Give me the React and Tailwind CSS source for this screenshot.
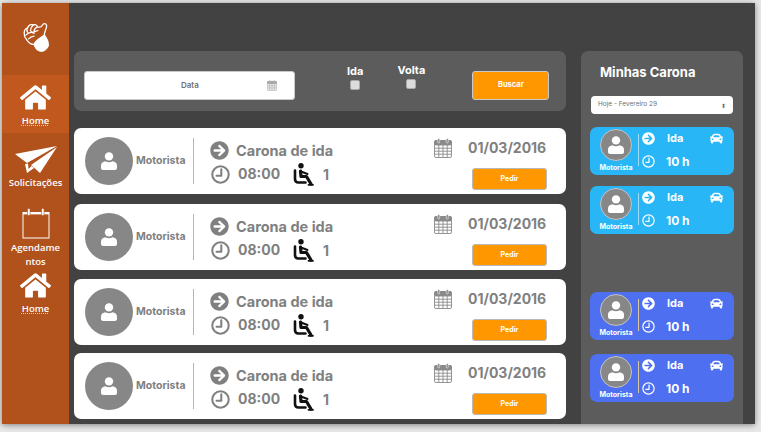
import { FaHome, FaArrowCircleRight, FaCar } from 'react-icons/fa'

const font = "font-['Inter','Liberation_Sans',sans-serif]"

function HandLogo() {
  return (
    <svg viewBox="0 0 28 32" className="w-[26px] h-[30px] shrink-0" fill="none" stroke="#fff" strokeWidth="1.4" strokeLinejoin="round" strokeLinecap="round">
      <path d="M1.5 11 C1 8 3 7 5 6 C6 3 9 2 11 3 C13 2 15 3 15.5 5 C18 6 20 5 21 3 C22 1 25 1 25.5 4 C25.5 7 23 10 23 14" />
      <path d="M1.5 11 C1 14 2 17 4 19 C6 22 9 24 12 24" />
      <path d="M5 6 C4 8 4 10 5 11 M11 3 C9 5 8 7 8 9 M15.5 5 C13 6 12 8 12 10 M3 14 C5 12 7 11 9 11 C11 11 14 10 16 9 M6 18 C8 16 10 15 12 15 M8 9 C9 11 10 12 12 12" />
      <path d="M12 24 C13 20 17 18 23 14 C26 18 28 22 27 26 C25 30 21 32 18 31 C15 30 13 27 12 24 Z" fill="#fff" />
    </svg>
  )
}

function PlaneIcon() {
  return (
    <svg viewBox="0 0 42 28" className="w-[42px] h-[28px] shrink-0" fill="#fff">
      <path d="M0 8 L42 0 L12 17 Z" />
      <path d="M42 1 L25 27 L16 19 Z" />
      <path d="M10 18 L12 27 L19 22 L16.5 20 L13.5 23 L13 17.5 Z" />
    </svg>
  )
}

function CalendarBig() {
  return (
    <svg viewBox="0 0 28 31" className="w-[28px] h-[31px] shrink-0" fill="none" stroke="#fff">
      <rect x="1" y="4.5" width="26" height="25.5" strokeWidth="1" />
      <rect x="1" y="4" width="26" height="2.4" fill="#fff" strokeWidth="0" />
      <rect x="5.5" y="0.5" width="2.6" height="7" rx="1.2" fill="#fff" stroke="#b1511b" strokeWidth="0.6" />
      <rect x="19.5" y="0.5" width="2.6" height="7" rx="1.2" fill="#fff" stroke="#b1511b" strokeWidth="0.6" />
    </svg>
  )
}

function GridCalendar({ className }) {
  return (
    <svg viewBox="0 0 18 20" className={className} fill="none" stroke="currentColor" strokeWidth="0.9">
      <rect x="0.5" y="2.5" width="17" height="17" rx="1.5" />
      <rect x="0.5" y="2.5" width="17" height="4.5" rx="1.5" fill="currentColor" />
      <path d="M0.5 10.2 H17.5 M0.5 13.2 H17.5 M0.5 16.2 H17.5 M4.8 7 V19.5 M9 7 V19.5 M13.2 7 V19.5" />
      <rect x="3.7" y="0.5" width="2" height="4.5" rx="1" fill="currentColor" stroke="#fff" strokeWidth="0.5" />
      <rect x="12.3" y="0.5" width="2" height="4.5" rx="1" fill="currentColor" stroke="#fff" strokeWidth="0.5" />
    </svg>
  )
}

function ClockIcon({ className, weight = 2.6 }) {
  return (
    <svg viewBox="0 0 24 24" className={className} fill="none" stroke="currentColor" strokeWidth={weight} strokeLinecap="round" strokeLinejoin="round">
      <circle cx="12" cy="12" r="10.4" />
      <path d="M13 5.5 V13.5 H7" />
    </svg>
  )
}

function SeatIcon() {
  return (
    <svg viewBox="0 0 21 23" className="w-[21px] h-[23px] shrink-0" fill="none" stroke="#111" strokeLinecap="round" strokeLinejoin="round">
      <circle cx="8" cy="2.8" r="2.7" fill="#111" stroke="none" />
      <path d="M2 7.5 V16 Q2 19.5 5.5 19.5 H12.5" strokeWidth="2.6" />
      <path d="M7.5 8 L8 13.5 H13.5 L18 21" strokeWidth="3.2" />
      <path d="M8 8.5 L14.5 11" strokeWidth="2" />
      <path d="M15.5 21.8 H20" strokeWidth="1.8" />
    </svg>
  )
}

function UserIcon({ className }) {
  return (
    <svg viewBox="0 0 16 18" className={className} fill="#fff">
      <circle cx="8" cy="4.4" r="4.2" />
      <path d="M0 16 V13.5 C0 10.8 2.2 9.6 4.5 9.2 C6.5 10.6 9.5 10.6 11.5 9.2 C13.8 9.6 16 10.8 16 13.5 V16 C16 17.2 15 18 14 18 H2 C1 18 0 17.2 0 16 Z" />
    </svg>
  )
}

function Avatar({ size, iconSize, ring }) {
  return (
    <div className={`${size} ${ring} rounded-full bg-[#878787] flex items-center justify-center shrink-0`}>
      <UserIcon className={iconSize} />
    </div>
  )
}

function SideItem({ icon, label, active, underline, className }) {
  return (
    <div className={`flex flex-col items-center shrink-0 ${active ? 'bg-[#c1591e]' : ''} ${className}`}>
      {icon}
      <span className={`font-['Open_Sans',sans-serif] mt-[2px] text-[9.5px] leading-[14px] font-semibold text-white text-center whitespace-pre-line ${underline ? 'underline decoration-dotted decoration-[#f3c9a8]' : ''}`}>{label}</span>
    </div>
  )
}

function RideCard({ className }) {
  return (
    <div className={`h-[66px] shrink-0 bg-white rounded-[7px] flex items-center pl-[11px] ${className}`}>
      <Avatar size="w-[48px] h-[48px]" iconSize="w-[16px] h-[18px]" ring="" />
      <span className="ml-[3px] w-[54px] text-[10.5px] font-bold text-[#808080]">Motorista</span>
      <div className="ml-[3px] w-px h-[46px] bg-[#b5b5b5]" />
      <div className="ml-[16px] w-[224px] pt-[4px] flex flex-col">
        <div className="flex items-center gap-[7px]">
          <FaArrowCircleRight className="w-[19px] h-[19px] text-[#808080]" />
          <span className="text-[14.5px] leading-[20px] font-bold text-[#808080]">Carona de ida</span>
        </div>
        <div className="flex items-center mt-[2px] pl-[1px]">
          <ClockIcon className="w-[19px] h-[19px] text-[#808080]" />
          <span className="ml-[8px] w-[55px] text-[14px] font-bold leading-[20px] text-[#808080]">08:00</span>
          <SeatIcon />
          <span className="ml-[9px] text-[14px] font-bold text-[#808080]">1</span>
        </div>
      </div>
      <div className="w-[113px] pt-[6px] flex flex-col">
        <div className="flex items-center">
          <GridCalendar className="w-[18px] h-[20px] shrink-0 text-[#8a8a8a]" />
          <span className="ml-[16px] text-[14px] leading-[20px] font-bold text-[#808080]">01/03/2016</span>
        </div>
        <button className="ml-[38px] mt-[10px] w-[75px] h-[22px] rounded-[3px] bg-[#ff9800] border border-[#b9b9b9] text-white text-[7px] font-bold">Pedir</button>
      </div>
    </div>
  )
}

function MiniCard({ color, line, className }) {
  return (
    <div className={`h-[48px] w-[144px] shrink-0 rounded-[7px] flex items-start text-white ${color} ${className}`}>
      <div className="ml-[7px] mt-[2px] w-[38px] flex flex-col items-center">
        <Avatar size="w-[32px] h-[32px]" iconSize="w-[16px] h-[18px]" ring="border border-[#c4c4c4]" />
        <span className="text-[7px] leading-[8px] mt-[3px] font-bold whitespace-nowrap">Motorista</span>
      </div>
      <div className={`ml-[3px] mt-[7px] w-px h-[32px] ${line}`} />
      <div className="ml-[3px] mt-[5px] flex flex-col gap-[10px]">
        <div className="flex items-center">
          <FaArrowCircleRight className="w-[13px] h-[13px]" />
          <span className="ml-[12px] w-[43px] text-[11px] leading-[13px] font-bold">Ida</span>
          <FaCar className="w-[13px] h-[13px]" />
        </div>
        <div className="flex items-center">
          <ClockIcon className="w-[13px] h-[13px]" weight={2.2} />
          <span className="ml-[11px] text-[12px] leading-[13px] font-bold">10 h</span>
        </div>
      </div>
    </div>
  )
}

export default function App() {
  return (
    <div className={`w-[761px] h-[432px] overflow-hidden bg-[#e8e8e8] pt-[3px] pl-[2px] ${font}`}>
      <div className="w-[753px] h-[421px] flex bg-[#424242] shadow-[0_1px_6px_rgba(0,0,0,0.45)]">
        <aside className="w-[67px] shrink-0 bg-[#b1511b] flex flex-col">
          <div className="h-[72px] pt-[19px] flex justify-center">
            <HandLogo />
          </div>
          <SideItem active underline className="h-[58px] pt-[8px]" label="Home" icon={<FaHome className="w-[31px] h-[29px] shrink-0 text-white" />} />
          <SideItem className="h-[75px] pt-[13px]" label="Solicitações" icon={<PlaneIcon />} />
          <SideItem className="h-[63px]" label={'Agendame\nntos'} icon={<CalendarBig />} />
          <SideItem underline label="Home" icon={<FaHome className="w-[31px] h-[29px] shrink-0 text-white" />} />
        </aside>
        <main className="flex-1 flex pl-[5px] pt-[48px]">
          <div className="w-[492px] flex flex-col">
            <div className="h-[60px] shrink-0 rounded-[7px] bg-[#5c5c5c] flex items-center pl-[10px]">
              <div className="mt-[8px] w-[211px] h-[29px] bg-white rounded-[3px] border border-[#c9c9c9] flex items-center text-[#6f6f6f]">
                <span className="ml-[96px] text-[8px] font-semibold">Data</span>
                <GridCalendar className="ml-[68px] w-[10px] h-[11px] text-[#9a9a9a]" />
              </div>
              <div className="ml-[52px] -mt-[8px] flex flex-col items-center">
                <span className="text-[11px] leading-[13px] font-bold text-white">Ida</span>
                <input type="checkbox" className="w-[10px] h-[10px] mt-[2px] appearance-none bg-[#dcdcdc] border border-[#aaa] rounded-[2px]" />
              </div>
              <div className="ml-[34px] -mt-[10px] flex flex-col items-center">
                <span className="text-[11px] leading-[13px] font-bold text-white">Volta</span>
                <input type="checkbox" className="w-[10px] h-[10px] mt-[2px] appearance-none bg-[#dcdcdc] border border-[#aaa] rounded-[2px]" />
              </div>
              <button className="mt-[8px] ml-[47px] w-[77px] h-[29px] rounded-[3px] bg-[#ff9800] border border-[#c9c9c9] text-white text-[7.5px] font-bold">Buscar</button>
            </div>
            <RideCard className="mt-[17px]" />
            <RideCard className="mt-[10px]" />
            <RideCard className="mt-[9px]" />
            <RideCard className="mt-[8px]" />
          </div>
          <div className="ml-[15px] w-[162px] h-[373px] rounded-t-[7px] bg-[#5c5c5c] flex flex-col items-center">
            <div className="self-start ml-[19px] mt-[14px] text-[13px] leading-[14px] font-bold text-white">Minhas Carona</div>
            <div className="mt-[17px] w-[142px] h-[18px] shrink-0 bg-white rounded-[4px] flex items-center justify-between px-[7px] text-[6.5px] text-[#6f6f6f]">
              <span>Hoje - Fevereiro 29</span>
              <span className="text-[6px]">⬍</span>
            </div>
            <MiniCard className="mt-[13px]" color="bg-[#29b6f6]" line="bg-[#9fdcf8]" />
            <MiniCard className="mt-[11px]" color="bg-[#29b6f6]" line="bg-[#9fdcf8]" />
            <MiniCard className="mt-[58px]" color="bg-[#4d6ff0]" line="bg-[#d8c79f]" />
            <MiniCard className="mt-[14px]" color="bg-[#4d6ff0]" line="bg-[#d8c79f]" />
          </div>
        </main>
      </div>
    </div>
  )
}
